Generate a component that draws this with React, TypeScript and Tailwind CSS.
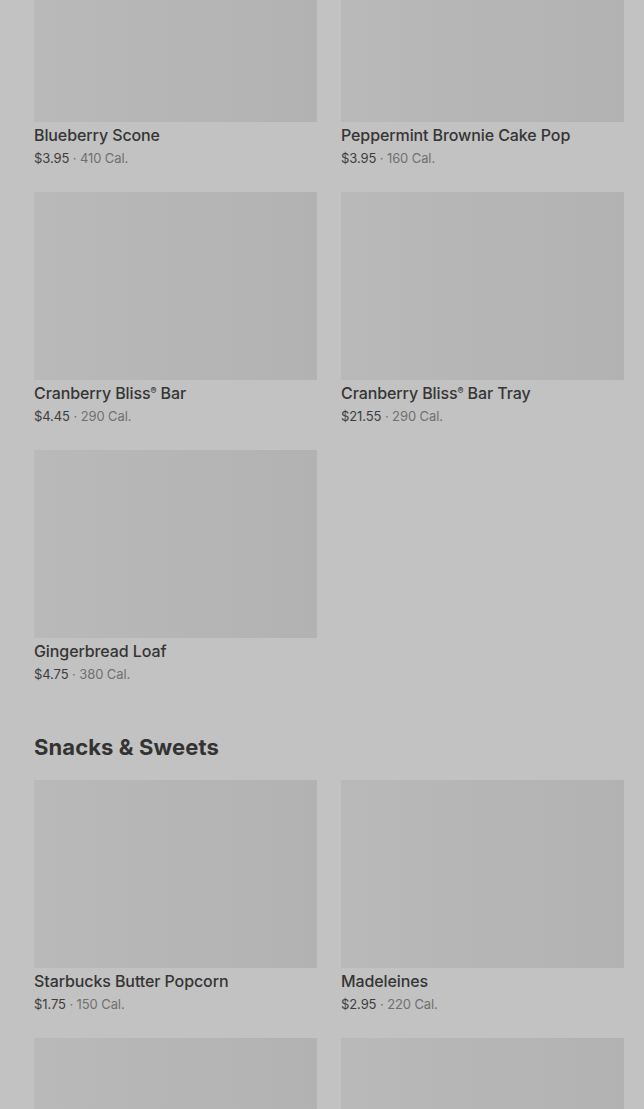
type Item = { name: string; price: string; cal: string };

const bakery: Item[] = [
  { name: "Blueberry Scone", price: "$3.95", cal: "410 Cal." },
  { name: "Peppermint Brownie Cake Pop", price: "$3.95", cal: "160 Cal." },
  { name: "Cranberry Bliss® Bar", price: "$4.45", cal: "290 Cal." },
  { name: "Cranberry Bliss® Bar Tray", price: "$21.55", cal: "290 Cal." },
  { name: "Gingerbread Loaf", price: "$4.75", cal: "380 Cal." },
];

const snacks: Item[] = [
  { name: "Starbucks Butter Popcorn", price: "$1.75", cal: "150 Cal." },
  { name: "Madeleines", price: "$2.95", cal: "220 Cal." },
  { name: "", price: "", cal: "" },
  { name: "", price: "", cal: "" },
];

// small raised ® like the source font
function Name({ text }: { text: string }) {
  const parts = text.split("®");
  return (
    <>
      {parts.map((p, i) => (
        <span key={i}>
          {p}
          {i < parts.length - 1 && (
            <span className="relative -top-[5px] text-[9px] leading-none">®</span>
          )}
        </span>
      ))}
    </>
  );
}

function Card({ item }: { item: Item }) {
  return (
    <div>
      <div className="h-[188px] bg-gradient-to-r from-[#b9b9b9] to-[#b2b2b2]" />
      {item.name && (
        <>
          <p className="h-[25px] pt-[1px] text-base leading-6 font-medium tracking-[-0.1px] text-[#353535]">
            <Name text={item.name} />
          </p>
          <p className="pt-[1px] text-[13px] leading-5 tracking-[-0.1px] text-[#3d3d3d]">
            {item.price} <span className="text-[#707070]">· {item.cal}</span>
          </p>
        </>
      )}
    </div>
  );
}

export default function App() {
  return (
    <div
      className="h-[1109px] overflow-hidden bg-[#c2c2c2]"
      style={{ fontFamily: "Inter, 'Noto Sans', sans-serif" }}
    >
      <div className="mt-[-66px] pl-[34px] pr-[20px]">
        <div className="grid grid-cols-2 gap-x-6 gap-y-6">
          {bakery.map((it) => (
            <Card key={it.name} item={it} />
          ))}
        </div>

        <h2 className="mt-[49px] mb-[19px] text-[22px] leading-7 font-bold tracking-[0.1px] text-[#333333]">
          Snacks &amp; Sweets
        </h2>

        <div className="grid grid-cols-2 gap-x-6 gap-y-6">
          {snacks.map((it, i) => (
            <Card key={i} item={it} />
          ))}
        </div>
      </div>
    </div>
  );
}
